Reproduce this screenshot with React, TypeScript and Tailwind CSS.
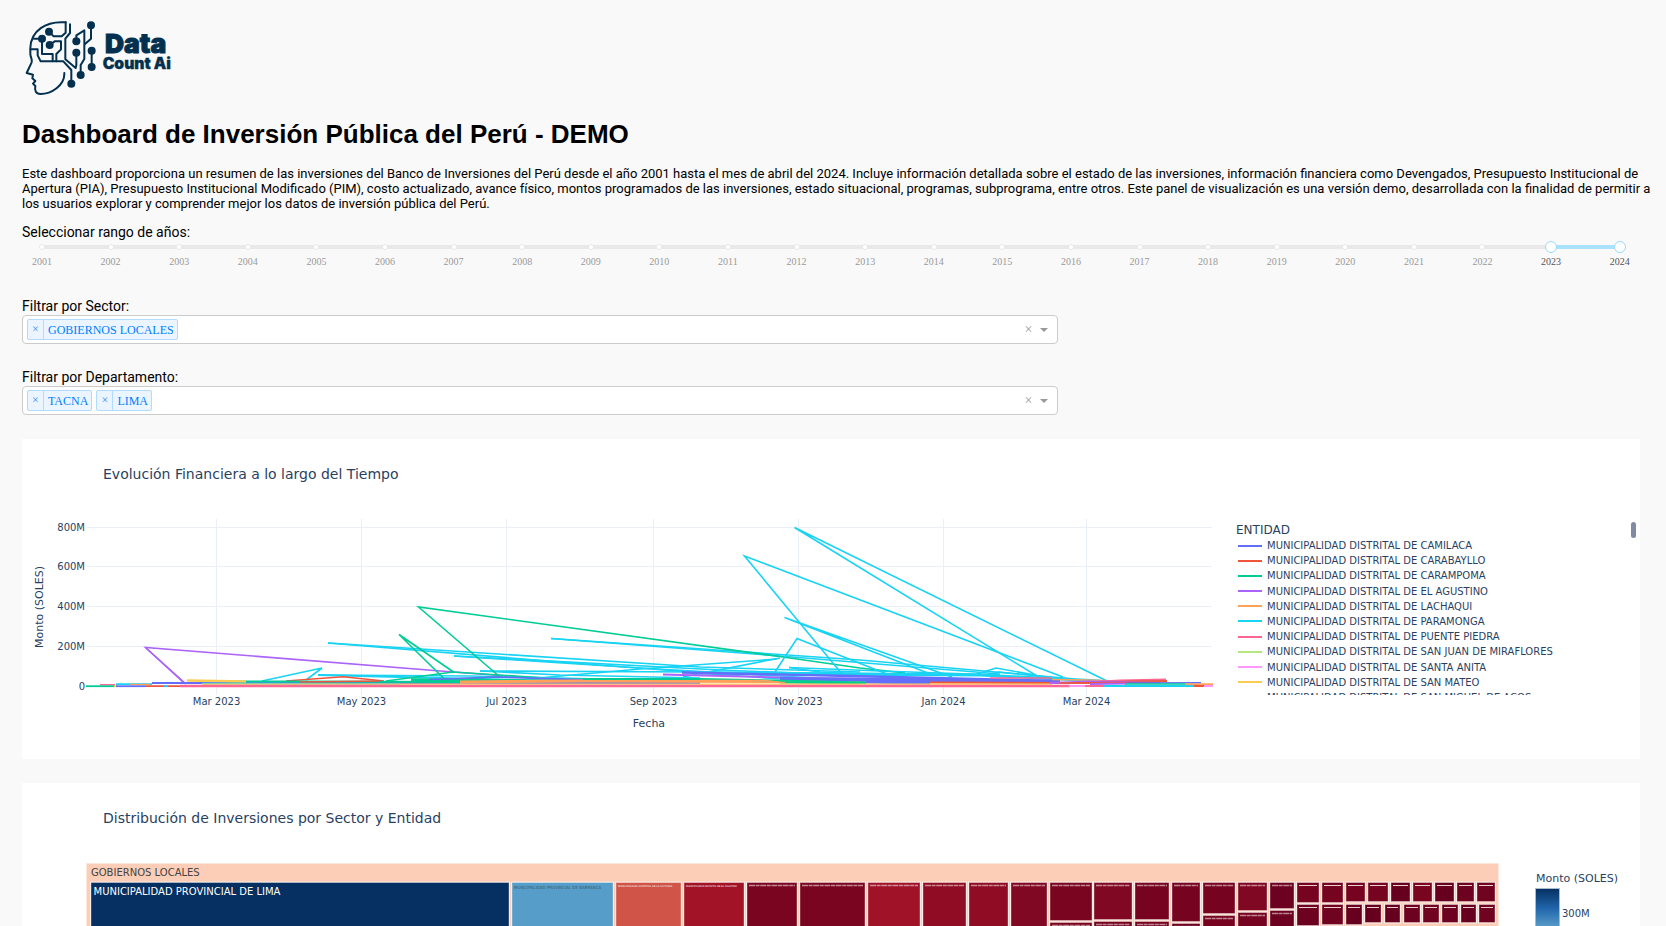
import { useState } from "react";

const YEARS = Array.from({ length: 24 }, (_, i) => 2001 + i);

const BLUE = "#636efa";
const RED = "#ef553b";
const GREEN = "#00cc96";
const PURPLE = "#ab63fa";
const ORANGE = "#ffa15a";
const CYAN = "#19d3f3";
const PINK = "#ff6692";
const LIME = "#b6e880";
const ROSE = "#ff97ff";
const YELLOW = "#fecb52";

const LEGEND = [
  { color: BLUE, name: "MUNICIPALIDAD DISTRITAL DE CAMILACA" },
  { color: RED, name: "MUNICIPALIDAD DISTRITAL DE CARABAYLLO" },
  { color: GREEN, name: "MUNICIPALIDAD DISTRITAL DE CARAMPOMA" },
  { color: PURPLE, name: "MUNICIPALIDAD DISTRITAL DE EL AGUSTINO" },
  { color: ORANGE, name: "MUNICIPALIDAD DISTRITAL DE LACHAQUI" },
  { color: CYAN, name: "MUNICIPALIDAD DISTRITAL DE PARAMONGA" },
  { color: PINK, name: "MUNICIPALIDAD DISTRITAL DE PUENTE PIEDRA" },
  { color: LIME, name: "MUNICIPALIDAD DISTRITAL DE SAN JUAN DE MIRAFLORES" },
  { color: ROSE, name: "MUNICIPALIDAD DISTRITAL DE SANTA ANITA" },
  { color: YELLOW, name: "MUNICIPALIDAD DISTRITAL DE SAN MATEO" },
  { color: BLUE, name: "MUNICIPALIDAD DISTRITAL DE SAN MIGUEL DE ACOS" },
];

const Y_TICKS: [string, number][] = [
  ["800M", 527.5],
  ["600M", 566.5],
  ["400M", 606.5],
  ["200M", 646.5],
  ["0", 686.5],
];

const X_TICKS: [string, number][] = [
  ["Mar 2023", 216.5],
  ["May 2023", 361.5],
  ["Jul 2023", 506.5],
  ["Sep 2023", 653.5],
  ["Nov 2023", 798.5],
  ["Jan 2024", 943.5],
  ["Mar 2024", 1086.5],
];

// color, points, stroke width
const SERIES: [string, string, number][] = [
  [PURPLE, "184,683 145.5,647.5 453,672 520,677", 1.6],
  [PURPLE, "186,684 146,648", 1.6],
  [CYAN, "262,681 322,668 306,680", 1.6],
  [CYAN, "328,643 700,667 860,672", 1.6],
  [CYAN, "328,643 560,662 780,679", 1.6],
  [CYAN, "454,656 720,670 900,677", 1.6],
  [CYAN, "454,656 640,668 850,680", 1.6],
  [CYAN, "318,675 600,682", 2],
  [CYAN, "318,675 470,676 640,680", 1.6],
  [CYAN, "480,671 700,672 930,674", 1.6],
  [CYAN, "480,671 560,675 700,678", 1.6],
  [CYAN, "551,638.5 860,660 1075,679", 1.6],
  [CYAN, "551,638.5 780,656 1000,674", 1.6],
  [GREEN, "500,677 418.5,607 783,657 860,668 905,673", 1.6],
  [GREEN, "453.5,672 399,634.5 446.5,681", 1.6],
  [GREEN, "386,681 453,672 560,679 700,680", 1.6],
  [GREEN, "411,679.5 600,681", 2.5],
  [GREEN, "498,677 411,681", 1.6],
  [CYAN, "527,679 640,669 777,659", 1.6],
  [CYAN, "683,677 780,658", 1.6],
  [CYAN, "842,674 744.5,556 1063,677", 1.6],
  [CYAN, "1107,681 794.5,527.5 1037,676", 1.6],
  [CYAN, "933,675 784.5,617.5 952,677", 1.6],
  [CYAN, "775,672 797,638.5 892,676", 1.6],
  [CYAN, "789,667.5 880,671 1000,675", 1.6],
  [CYAN, "789,667.5 820,672 900,676", 1.6],
  [CYAN, "977,674 996,668 1035,675", 1.6],
  [CYAN, "985,675 999,672 1048,677", 1.6],
  [CYAN, "700,673 980,675 1100,681", 3],
  [RED, "286,681 343,676.7 384,681", 1.6],
  [BLUE, "430,679.5 498,677 620,681", 1.6],
  [BLUE, "152,683 700,683", 2.2],
  [GREEN, "228,681.5 300,681.5 460,682", 2],
  [RED, "300,682 380,681", 1.6],
  [YELLOW, "187,680.5 246,681.5", 2.5],
  [PURPLE, "663,674.5 800,678 1000,680", 2],
  [BLUE, "682,672.5 850,676 1060,681", 2.4],
  [BLUE, "780,679 1060,682", 4],
  [ORANGE, "460,682 583,681 773,681.5 860,683", 3],
  [GREEN, "583,679 700,679 866,682.5", 2],
  [GREEN, "780,682.5 866,683", 2],
  [ORANGE, "700,680.5 765,680.5 785,683", 1.6],
  [BLUE, "866,682 930,683", 3],
  [RED, "930,682.5 1100,683 1127,683", 2],
  [CYAN, "202,683.5 400,684", 1.6],
  [YELLOW, "202,684.2 1052,684.2", 1.2],
  [PINK, "990,678 1052,678", 1.6],
  [ORANGE, "1052,679.5 1085,680 1120,681", 1.4],
  [PINK, "1100,681.5 1120,680.5 1166,679.5", 1.8],
  [RED, "1090,683 1130,681.5 1167,681", 1.8],
  [PURPLE, "1050,683 1090,681.5 1160,682.5", 2],
  [RED, "1060,683 1160,682", 1.4],
  [BLUE, "1127,683 1201,682.7", 1.6],
  [PURPLE, "1090,684 1127,683.5", 1.8],
  [PINK, "180,686 1070,686", 2.4],
  [PINK, "100,684.7 115,684.7", 1.4],
  [GREEN, "86,686.2 115,686.2", 1.8],
  [YELLOW, "114,686.2 117,686.2", 1.8],
  [CYAN, "116,684.2 152,684.2", 1.8],
  [ORANGE, "130,684.5 150,684.5", 1.4],
  [BLUE, "116,686.2 145,686.2", 1.8],
  [RED, "145,686.2 180,686.2", 1.8],
  [CYAN, "164,686.2 168,686.2", 1.8],
  [ROSE, "1069,686 1085,686", 2],
  [PINK, "1085,686 1105,686", 2],
  [CYAN, "1104,686 1194,686", 2],
  [GREEN, "1125,684 1185,684", 1.6],
  [ORANGE, "1185,684.2 1213,684.2", 1.8],
  [RED, "1194,686 1204,686", 2],
  [ROSE, "1204,686 1213,686", 2],
];

function FinanceChart() {
  return (
    <svg viewBox="22 511 1195 248" className="min-w-0 flex-1" role="img" aria-label="Monto (SOLES) por Fecha">
      {Y_TICKS.map(([label, y]) => (
        <g key={label}>
          <line x1="87" x2="1212" y1={y} y2={y} stroke="#ebf0f8" />
          <text x="85" y={y + 3.5} textAnchor="end" fontSize="10" fill="#2a3f5f">
            {label}
          </text>
        </g>
      ))}
      {X_TICKS.map(([label, x]) => (
        <g key={label}>
          <line x1={x} x2={x} y1="519" y2="695" stroke="#ebf0f8" />
          <text x={x} y="705" textAnchor="middle" fontSize="10" fill="#2a3f5f">
            {label}
          </text>
        </g>
      ))}
      {SERIES.map(([color, points, width], i) => (
        <polyline key={i} points={points} fill="none" stroke={color} strokeWidth={width} />
      ))}
      <text x="649" y="727" textAnchor="middle" fontSize="11" fill="#2a3f5f">
        Fecha
      </text>
      <text transform="translate(43 607) rotate(-90)" textAnchor="middle" fontSize="11" fill="#2a3f5f">
        Monto (SOLES)
      </text>
    </svg>
  );
}

// left, right, top, bottom, fill
const TILES: [number, number, number, number, string][] = [
  [91, 509, 883, 930, "#053061"],
  [512, 613, 883, 930, "#569ec9"],
  [616, 681, 883, 930, "#d05548"],
  [684, 744, 883, 930, "#a31328"],
  [747, 797, 883, 930, "#7a0520"],
  [800, 865, 883, 930, "#7a0520"],
  [868, 920, 883, 930, "#a01228"],
  [923, 966, 883, 930, "#8f0c24"],
  [969, 1008, 883, 930, "#8f0c24"],
  [1011, 1047, 883, 930, "#800823"],
  [1050, 1092, 883, 920, "#7a0520"],
  [1050, 1092, 923, 930, "#7a0520"],
  [1094, 1132, 883, 919, "#800823"],
  [1094, 1132, 922, 930, "#760421"],
  [1135, 1169, 883, 919, "#760421"],
  [1135, 1169, 922, 930, "#760421"],
  [1172, 1200, 883, 921, "#760421"],
  [1172, 1200, 924, 930, "#6c0220"],
  [1203, 1235, 883, 913, "#760421"],
  [1203, 1235, 916, 930, "#760421"],
  [1238, 1267, 883, 910, "#800823"],
  [1238, 1267, 913, 930, "#760421"],
  [1270, 1294, 883, 908, "#6c0220"],
  [1270, 1294, 911, 930, "#6c0220"],
  [1297, 1319, 883, 902, "#760421"],
  [1297, 1319, 905, 925, "#6c0220"],
  [1322, 1343, 883, 902, "#760421"],
  [1322, 1343, 905, 924, "#70031f"],
  [1346, 1365, 883, 901, "#760421"],
  [1368, 1388, 883, 901, "#760421"],
  [1391, 1410, 883, 901, "#67001f"],
  [1413, 1432, 883, 901, "#7a0520"],
  [1435, 1454, 883, 901, "#67001f"],
  [1457, 1474, 883, 901, "#6c0220"],
  [1477, 1495, 883, 901, "#70031f"],
  [1346, 1362, 905, 924, "#67001f"],
  [1365, 1381, 905, 922, "#67001f"],
  [1385, 1400, 905, 922, "#67001f"],
  [1404, 1420, 905, 922, "#6c0220"],
  [1423, 1439, 905, 922, "#70031f"],
  [1442, 1458, 905, 922, "#6c0220"],
  [1461, 1476, 905, 922, "#67001f"],
  [1479, 1495, 905, 922, "#70031f"],
];

// x, baseline, font size, fill, text
const TILE_LABELS: [number, number, number, string, string][] = [
  [514, 889, 4, "#3b5a70", "MUNICIPALIDAD PROVINCIAL DE BARRANCA"],
  [618, 887, 2.5, "#ffffff", "MUNICIPALIDAD DISTRITAL DE LA VICTORIA"],
  [686, 887, 2.3, "#ffffff", "MUNICIPALIDAD DISTRITAL DE EL AGUSTINO"],
];

function Treemap() {
  return (
    <svg viewBox="22 855 1618 71" className="block w-full" role="img" aria-label="Inversiones por entidad">
      <defs>
        <linearGradient id="scale" x1="0" x2="0" y1="0" y2="1">
          <stop offset="0" stopColor="#053061" />
          <stop offset="0.45" stopColor="#2166ac" />
          <stop offset="1" stopColor="#6db0d3" />
        </linearGradient>
      </defs>
      <rect x="86.5" y="863.5" width="1412" height="80" fill="#fcceb7" stroke="#fde6da" />
      <text x="91" y="875.5" fontSize="10" fill="#444444">
        GOBIERNOS LOCALES
      </text>
      {TILES.map(([l, r, t, b, fill]) => (
        <g key={`${l}-${t}`}>
          <rect x={l - 1} y={t - 1.5} width={r - l + 2} height={b - t + 3} fill="#fde9e0" />
          <rect x={l} y={t - 0.5} width={r - l} height={b - t + 1} fill={fill} stroke="#ffffff" strokeOpacity="0.35" />
          {l > 744 && (
            <line
              x1={l + 2}
              x2={r - 2}
              y1={t + 2.5}
              y2={t + 2.5}
              stroke="#f3dbe0"
              strokeOpacity={l > 1290 ? 0.95 : 0.6}
              strokeWidth={l > 1290 ? 1 : 1.4}
              strokeDasharray={l > 1290 ? undefined : "6 0.6 4 0.6"}
            />
          )}
        </g>
      ))}
      <text x="93.5" y="894.5" fontSize="10" fill="#ffffff">
        MUNICIPALIDAD PROVINCIAL DE LIMA
      </text>
      {TILE_LABELS.map(([x, y, size, fill, label]) => (
        <text key={label} x={x} y={y} fontSize={size} fill={fill}>
          {label}
        </text>
      ))}
      <text x="1536" y="882" fontSize="11" fill="#2a3f5f">
        Monto (SOLES)
      </text>
      <rect x="1535.5" y="888.5" width="24" height="45" fill="url(#scale)" stroke="#a9bccf" />
      <text x="1562" y="917" fontSize="10" fill="#2a3f5f">
        300M
      </text>
    </svg>
  );
}

function Logo() {
  const nodes = [
    [117, 65],
    [96, 86],
    [119, 105],
    [199, 94],
    [199, 128],
    [243, 46],
    [245, 122],
    [245, 171],
    [212, 195],
    [184, 221],
  ];
  return (
    <svg viewBox="36 18 465 252" className="block h-[84px] w-[155px]" role="img" aria-label="Data Count Ai">
      <g fill="none" stroke="#03304f" strokeWidth="6" strokeLinejoin="round" strokeLinecap="round">
        <path d="M167 37C108 32 62 62 61 115v16c0 12 7 16 4 26L50 189l19 5-2 11 9 8-7 8 7 7c-3 14 2 24 15 24 34 0 72-26 72-60v-3" />
        <path d="M117 65l14 14h24l12-11V37" />
        <path d="M72 86h24v46h32v22" />
        <path d="M119 105l15-11h19v24l-14 14v22" />
        <path d="M62 118h21v18l9 18h68l24 26v41" />
        <path d="M180 43v26l-14 17v62l31 26 2-8v-38" />
        <path d="M199 94V76l24-15v86l-11 18v30" />
        <path d="M243 46v40l-18 16" />
        <path d="M245 122v49" />
      </g>
      {nodes.map(([cx, cy]) => (
        <circle key={`${cx}-${cy}`} cx={cx} cy={cy} r="12" fill="#03304f" />
      ))}
      <g fill="#03304f" stroke="#03304f" fontFamily="Inter, sans-serif" fontWeight="900">
        <text x="285" y="128" fontSize="79" strokeWidth="3">
          Data
        </text>
        <text x="278" y="177" fontSize="47" strokeWidth="1">
          Count Ai
        </text>
      </g>
    </svg>
  );
}

function YearRange() {
  const [from, setFrom] = useState(2023);
  const [to, setTo] = useState(2024);
  const pct = (year: number) => ((year - 2001) / 23) * 100;
  const range =
    "pointer-events-none absolute inset-x-[-6px] top-0 h-3 w-[calc(100%+12px)] appearance-none bg-transparent [&::-webkit-slider-thumb]:pointer-events-auto [&::-webkit-slider-thumb]:size-3 [&::-webkit-slider-thumb]:appearance-none [&::-webkit-slider-thumb]:rounded-full [&::-webkit-slider-thumb]:border [&::-webkit-slider-thumb]:border-[#96dbfa] [&::-webkit-slider-thumb]:bg-white";
  return (
    <fieldset className="mx-5">
      <div className="relative flex h-3 items-center">
        <div className="h-1 w-full rounded-full bg-[#e9e9e9]" />
        <div
          className="absolute h-1 bg-[#abe2fb]"
          style={{ left: `${pct(from)}%`, width: `${pct(to) - pct(from)}%` }}
        />
        <div className="absolute inset-x-[-3px] flex justify-between">
          {YEARS.map((y) => (
            <span
              key={y}
              className={`size-[6px] rounded-full border bg-white ${y >= from && y <= to ? "border-[#96dbfa]" : "border-[#e9e9e9]"}`}
            />
          ))}
        </div>
        <input
          type="range"
          aria-label="Año inicial"
          min={2001}
          max={2024}
          value={from}
          onChange={(e) => setFrom(Math.min(+e.target.value, to))}
          className={range}
        />
        <input
          type="range"
          aria-label="Año final"
          min={2001}
          max={2024}
          value={to}
          onChange={(e) => setTo(Math.max(+e.target.value, from))}
          className={range}
        />
      </div>
      <div className="-mx-4 mt-[2px] flex justify-between font-['Liberation_Serif',serif] text-[10px] leading-[14px]">
        {YEARS.map((y) => (
          <span key={y} className={`w-8 text-center ${y >= from && y <= to ? "text-[#555]" : "text-[#999]"}`}>
            {y}
          </span>
        ))}
      </div>
    </fieldset>
  );
}

function MultiSelect({ id, label, initial }: { id: string; label: string; initial: string[] }) {
  const [values, setValues] = useState(initial);
  return (
    <div>
      <label htmlFor={id} className="block text-sm leading-[18px]">
        {label}
      </label>
      <div className="flex h-[29px] w-[64%] items-center gap-1 rounded border border-[#ccc] bg-white pr-[5px] pl-1 font-['Liberation_Serif',serif]">
        {values.map((v) => (
          <span
            key={v}
            className="flex h-[21px] items-center rounded-xs border border-[#b3dbff] bg-[#ebf5ff] text-xs text-[#007eff]"
          >
            <button
              type="button"
              aria-label={`Quitar ${v}`}
              onClick={() => setValues(values.filter((x) => x !== v))}
              className="h-full w-4 border-r border-[#b3dbff] leading-[17px] text-[#3392ff]"
            >
              ×
            </button>
            <span className="pr-[3px] pl-1">{v}</span>
          </span>
        ))}
        <input id={id} className="h-5 min-w-0 flex-1 bg-transparent text-xs outline-none" />
        <button
          type="button"
          aria-label="Borrar selección"
          onClick={() => setValues([])}
          className="text-sm leading-4 text-[#999]"
        >
          ×
        </button>
        <button type="button" aria-label="Abrir opciones" className="flex w-[15px] justify-center">
          <svg viewBox="0 0 8 4" className="h-1 w-2" aria-hidden="true">
            <path d="M0 0h8L4 4z" fill="#999" />
          </svg>
        </button>
      </div>
    </div>
  );
}

export default function App() {
  return (
    <main className="bg-[#f9f9f9] pt-4 pr-[26px] pl-[22px] font-[Roboto,sans-serif] text-black">
      <Logo />
      <h1 className="mt-[19px] font-['Liberation_Sans',sans-serif] text-[26px] leading-[30px] font-bold">
        Dashboard de Inversión Pública del Perú - DEMO
      </h1>
      <p className="mt-[17px] -mr-4 text-[13px] leading-[15px]">
        Este dashboard proporciona un resumen de las inversiones del Banco de Inversiones del Perú desde el año 2001
        hasta el mes de abril del 2024. Incluye información detallada sobre el estado de las inversiones, información
        financiera como Devengados, Presupuesto Institucional de Apertura (PIA), Presupuesto Institucional Modificado
        (PIM), costo actualizado, avance físico, montos programados de las inversiones, estado situacional, programas,
        subprograma, entre otros. Este panel de visualización es una versión demo, desarrollada con la finalidad de
        permitir a los usuarios explorar y comprender mejor los datos de inversión pública del Perú.
      </p>
      <section className="mt-3">
        <h2 className="text-sm leading-[18px]">Seleccionar rango de años:</h2>
        <YearRange />
      </section>
      <div className="mt-7 flex flex-col gap-6">
        <MultiSelect id="sector" label="Filtrar por Sector:" initial={["GOBIERNOS LOCALES"]} />
        <MultiSelect id="departamento" label="Filtrar por Departamento:" initial={["TACNA", "LIMA"]} />
      </div>
      <section className="mt-6 bg-white font-['DejaVu_Sans',sans-serif] text-[#2a3f5f]">
        <h2 className="h-[72px] pt-[25px] pl-[81px] text-sm">Evolución Financiera a lo largo del Tiempo</h2>
        <div className="flex items-start">
          <FinanceChart />
          <div className="flex h-[184px] w-[423px] shrink-0 justify-between overflow-hidden pr-1 pl-[19px]">
            <div className="pt-[11px]">
              <h3 className="text-xs leading-4">ENTIDAD</h3>
              <ul className="grid h-[167px] grid-rows-11 pl-[2px] text-[10px] leading-[15px]">
                {LEGEND.map(({ color, name }) => (
                  <li key={name} className="flex items-center gap-[5px]">
                    <svg viewBox="0 0 24 2" className="h-[2px] w-6" aria-hidden="true">
                      <rect width="24" height="2" fill={color} />
                    </svg>
                    {name}
                  </li>
                ))}
              </ul>
            </div>
            <div className="mt-[11px] h-4 w-[5px] rounded-full bg-[#808ba5]" />
          </div>
        </div>
      </section>
      <section className="mt-6 bg-white font-['DejaVu_Sans',sans-serif] text-[#2a3f5f]">
        <h2 className="h-[72px] pt-[25px] pl-[81px] text-sm">Distribución de Inversiones por Sector y Entidad</h2>
        <Treemap />
      </section>
    </main>
  );
}
